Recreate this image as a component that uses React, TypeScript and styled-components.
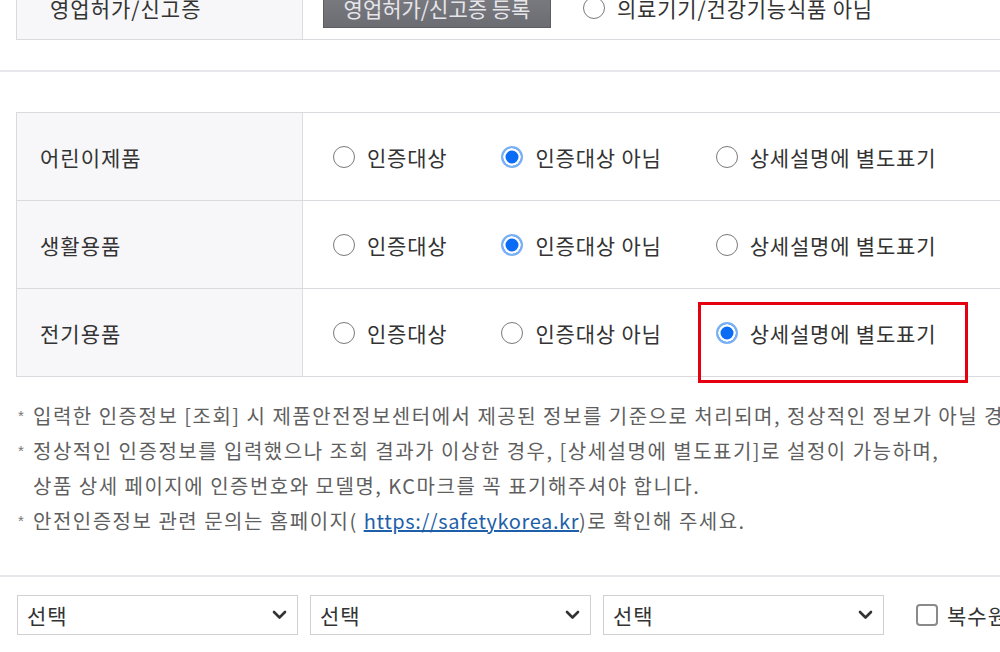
import React from "react";
import styled, { createGlobalStyle } from "styled-components";

const Global = createGlobalStyle`
  html, body { margin: 0; padding: 0; background: #fff; overflow: hidden; }
  body { width: 1000px; height: 652px; font-family: "Noto Sans CJK KR", "Noto Sans", sans-serif; color: #333; }
`;

const Page = styled.div`
  width: 1000px;
  height: 652px;
  overflow: hidden;
  display: flex;
  flex-direction: column;
`;

const Table = styled.div<{ $top: number; $noTop?: boolean }>`
  margin-top: ${(p) => p.$top}px;
  margin-left: 16px;
  width: 1100px;
  border-top: ${(p) => (p.$noTop ? "none" : "1px solid #d9d9de")};
  border-left: 1px solid #d9d9de;
`;

const Row = styled.div<{ $h: number }>`
  display: grid;
  grid-template-columns: 286px 1fr;
  height: ${(p) => p.$h}px;
  border-bottom: 1px solid #d9d9de;
`;

const Label = styled.div<{ $pad: number }>`
  background: #f7f7f9;
  border-right: 1px solid #dcdce0;
  display: flex;
  align-items: center;
  padding-left: ${(p) => p.$pad}px;
  font-size: 21px;
  letter-spacing: 1px;
  color: #333;
  white-space: nowrap;
`;

const Value = styled.div<{ $pad: number; $gap: number }>`
  display: flex;
  align-items: center;
  padding-left: ${(p) => p.$pad}px;
  gap: ${(p) => p.$gap}px;
  white-space: nowrap;
`;

const GrayButton = styled.div`
  width: 228px;
  height: 40px;
  margin-right: 32px;
  box-sizing: border-box;
  background: linear-gradient(#7d7d84, #6c6c73);
  border: 1px solid #5d5d63;
  color: #e6e6ea;
  font-size: 21px;
  display: flex;
  align-items: center;
  justify-content: center;
`;

const Option = styled.label`
  position: relative;
  display: flex;
  align-items: center;
  gap: 12px;
  font-size: 21px;
  letter-spacing: 0.8px;
  color: #333;
  height: 24px;
`;

const RadioDot = styled.span<{ $on?: boolean }>`
  width: 22px;
  height: 22px;
  box-sizing: border-box;
  border-radius: 50%;
  flex: none;
  border: ${(p) => (p.$on ? "2.5px solid #7ab0f4" : "1.5px solid #7a7a7a")};
  background: ${(p) => (p.$on ? "#0a6cf5" : "#fff")};
  box-shadow: ${(p) => (p.$on ? "inset 0 0 0 2.5px #fff" : "none")};
`;

const Highlight = styled.span`
  position: absolute;
  left: -18px;
  top: -19px;
  width: 270px;
  height: 81px;
  box-sizing: border-box;
  border: 3px solid #e4000f;
  pointer-events: none;
`;

const Divider = styled.div<{ $top: number }>`
  margin-top: ${(p) => p.$top}px;
  height: 2px;
  background: #e8e8ec;
  width: 100%;
  flex: none;
`;

const Notes = styled.div`
  margin-top: 21px;
  margin-left: 18px;
  font-size: 20px;
  letter-spacing: 1.5px;
  line-height: 35px;
  color: #5f5f5f;
  white-space: nowrap;
`;

const Note = styled.div`
  display: grid;
  grid-template-columns: 15px auto;
`;

const Star = styled.span`
  font-family: "Liberation Sans", sans-serif;
  font-size: 15px;
  line-height: 31px;
  padding-top: 2px;
  letter-spacing: 0;
  color: #777;
`;

const Link = styled.a`
  color: #1d5fa8;
  text-decoration: underline;
  letter-spacing: 0.6px;
`;

const SelectRow = styled.div`
  margin-top: 18px;
  margin-left: 17px;
  display: flex;
  align-items: center;
  gap: 12px;
  white-space: nowrap;
`;

const Select = styled.div`
  flex: none;
  width: 281px;
  height: 40px;
  box-sizing: border-box;
  border: 1px solid #cfcfd4;
  display: flex;
  align-items: center;
  justify-content: space-between;
  padding: 0 10px 0 9px;
  font-size: 21px;
  letter-spacing: 1px;
  color: #333;
`;

const CheckGroup = styled.div`
  flex: none;
  margin-left: 20px;
  display: flex;
  align-items: center;
  gap: 9px;
  font-size: 21px;
  letter-spacing: 1px;
  color: #333;
`;

const CheckBox = styled.span`
  width: 22px;
  height: 22px;
  box-sizing: border-box;
  border: 2px solid #8a8a8a;
  border-radius: 4px;
  background: #fff;
`;

const Chevron = () => (
  <svg width="15" height="10" viewBox="0 0 15 10">
    <polyline points="2,2 7.5,7.5 13,2" fill="none" stroke="#333" strokeWidth="2.6" strokeLinecap="round" strokeLinejoin="round" />
  </svg>
);

const certRows: { label: string; selected: number; highlight?: boolean }[] = [
  { label: "어린이제품", selected: 1 },
  { label: "생활용품", selected: 1 },
  { label: "전기용품", selected: 2, highlight: true },
];

const options = ["인증대상", "인증대상 아님", "상세설명에 별도표기"];

export default function App() {
  return (
    <Page>
      <Global />
      <Table $top={-24} $noTop>
        <Row $h={63}>
          <Label $pad={33}>영업허가/신고증</Label>
          <Value $pad={20} $gap={0}>
            <GrayButton>영업허가/신고증 등록</GrayButton>
            <Option>
              <RadioDot />
              의료기기/건강기능식품 아님
            </Option>
          </Value>
        </Row>
      </Table>
      <Divider $top={30} />
      <Table $top={40}>
        {certRows.map((r) => (
          <Row $h={87} key={r.label}>
            <Label $pad={23}>{r.label}</Label>
            <Value $pad={30} $gap={54}>
              {options.map((o, i) => (
                <Option key={o}>
                  <RadioDot $on={r.selected === i} />
                  {o}
                  {r.highlight && r.selected === i && <Highlight />}
                </Option>
              ))}
            </Value>
          </Row>
        ))}
      </Table>
      <Notes>
        <Note>
          <Star>*</Star>
          <span>입력한 인증정보 [조회] 시 제품안전정보센터에서 제공된 정보를 기준으로 처리되며, 정상적인 정보가 아닐 경우 등록이 제한될 수 있습니다.</span>
        </Note>
        <Note>
          <Star>*</Star>
          <span>
            정상적인 인증정보를 입력했으나 조회 결과가 이상한 경우, [상세설명에 별도표기]로 설정이 가능하며,
            <br />
            상품 상세 페이지에 인증번호와 모델명, KC마크를 꼭 표기해주셔야 합니다.
          </span>
        </Note>
        <Note>
          <Star>*</Star>
          <span>
            안전인증정보 관련 문의는 홈페이지( <Link href="#">https://safetykorea.kr</Link>)로 확인해 주세요.
          </span>
        </Note>
      </Notes>
      <Divider $top={37} />
      <SelectRow>
        <Select>
          선택
          <Chevron />
        </Select>
        <Select>
          선택
          <Chevron />
        </Select>
        <Select>
          선택
          <Chevron />
        </Select>
        <CheckGroup>
          <CheckBox />
          복수원산지
        </CheckGroup>
      </SelectRow>
    </Page>
  );
}
